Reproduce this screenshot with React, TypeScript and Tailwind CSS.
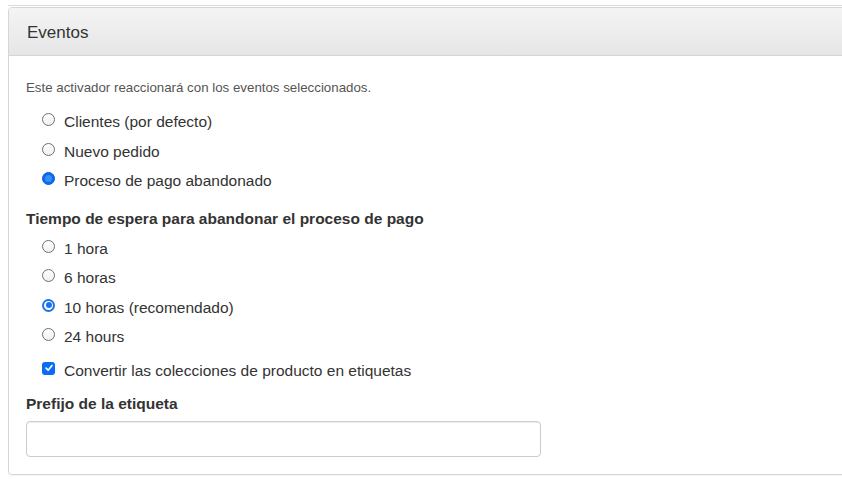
import React from 'react';

type RadioProps = {
  label: string;
  checked?: boolean;
  ring?: boolean;
};

const Radio: React.FC<RadioProps> = ({ label, checked, ring }) => (
  <div className="flex h-[29.5px] items-center">
    <span className="ml-[16px] flex w-[22px] shrink-0 -translate-y-[2px]">
      {checked ? (
        ring ? (
          <span className="flex h-[13px] w-[13px] items-center justify-center rounded-full bg-[#1a73e8]">
            <span className="flex h-[9px] w-[9px] items-center justify-center rounded-full bg-white">
              <span className="h-[6px] w-[6px] rounded-full bg-[#1a73e8]" />
            </span>
          </span>
        ) : (
          <span className="flex h-[13px] w-[13px] items-center justify-center rounded-full border border-[#0b5bd3] bg-[#0a6cf0]">
            <span className="h-[7px] w-[7px] rounded-full bg-[#3b8cf7]" />
          </span>
        )
      ) : (
        <span className="h-[13px] w-[13px] rounded-full border border-[#6f6f6f] bg-gradient-to-b from-white to-[#f0f0f0]" />
      )}
    </span>
    <span className="text-[15.5px] text-[#333]">{label}</span>
  </div>
);

export default function App() {
  return (
    <div
      className="h-[489px] w-[842px] overflow-hidden bg-white pt-[5px]"
      style={{ fontFamily: '"Liberation Sans", Arial, sans-serif' }}
    >
      <div className="ml-[8px] h-px bg-[#dcdcdc]" />
      {/* Panel */}
      <div className="ml-[8px] mt-[1px] w-[850px] rounded-[4px] border border-[#d6d6d6] shadow-[0_1px_1px_rgba(0,0,0,0.05)]">
        <div className="flex h-[48px] items-center rounded-t-[4px] border-b border-[#d4d4d4] bg-gradient-to-b from-[#f4f4f4] to-[#e6e6e6] px-[18px] pt-[3px]">
          <h3 className="text-[17px] text-[#333]">Eventos</h3>
        </div>
        <div className="px-[17px] pb-[17px] pt-[23px] text-[#333]">
          <p className="text-[13.3px] leading-[18px] text-[#555]">
            Este activador reaccionará con los eventos seleccionados.
          </p>
          <div className="mt-[10px]">
            <Radio label="Clientes (por defecto)" />
            <Radio label="Nuevo pedido" />
            <Radio label="Proceso de pago abandonado" checked />
          </div>
          <h4 className="mt-[13px] text-[15.5px] font-bold leading-[20px]">
            Tiempo de espera para abandonar el proceso de pago
          </h4>
          <div className="mt-[5px]">
            <Radio label="1 hora" />
            <Radio label="6 horas" />
            <Radio label="10 horas (recomendado)" checked ring />
            <Radio label="24 hours" />
          </div>
          <div className="mt-[4px] flex h-[29.5px] items-center">
            <span className="ml-[16px] flex w-[22px] shrink-0 -translate-y-[2px]">
              <span className="flex h-[13px] w-[13px] items-center justify-center rounded-[3px] bg-[#0a6cf0]">
                <svg viewBox="0 0 12 12" className="h-[10px] w-[10px]">
                  <path d="M2.5 6.2 L5 8.6 L9.6 3" fill="none" stroke="white" strokeWidth="2" strokeLinecap="round" strokeLinejoin="round" />
                </svg>
              </span>
            </span>
            <span className="text-[15.5px]">Convertir las colecciones de producto en etiquetas</span>
          </div>
          <label className="mt-[9px] block text-[15.5px] font-bold leading-[20px]">
            Prefijo de la etiqueta
          </label>
          <input
            type="text"
            className="mt-[7px] block h-[36px] w-[515px] rounded-[4px] border border-[#ccc] shadow-[inset_0_1px_1px_rgba(0,0,0,0.075)] outline-none"
          />
        </div>
      </div>
    </div>
  );
}
